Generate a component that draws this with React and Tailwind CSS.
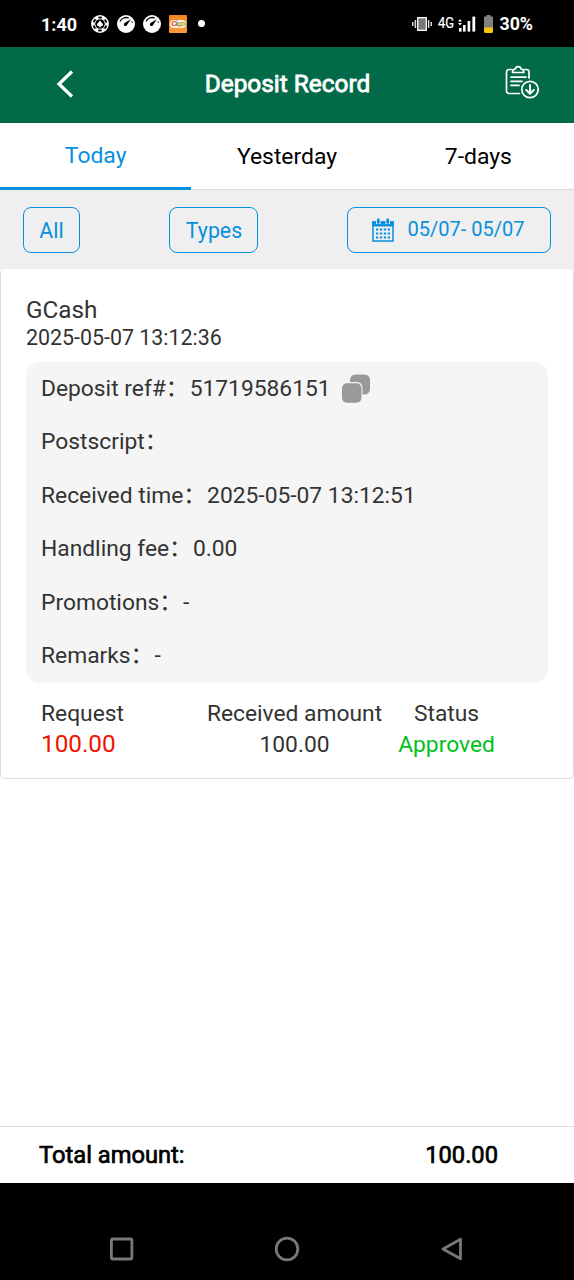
const tabs = ["Today", "Yesterday", "7-days"];

const details = [
  { label: "Deposit ref#", value: "51719586151", copy: true },
  { label: "Postscript", value: "" },
  { label: "Received time", value: "2025-05-07 13:12:51" },
  { label: "Handling fee", value: "0.00" },
  { label: "Promotions", value: "-" },
  { label: "Remarks", value: "-" },
];

const ChipIcon = () => (
  <svg width="18" height="18" viewBox="0 0 18 18" fill="none">
    <circle cx="9" cy="9" r="8.2" stroke="#fff" strokeWidth="1.4" />
    <circle
      cx="9"
      cy="9"
      r="6.8"
      stroke="#fff"
      strokeWidth="2.6"
      strokeDasharray="3.56 3.56"
      strokeDashoffset="1.78"
    />
    <circle cx="9" cy="9" r="5.2" stroke="#fff" strokeWidth="0.9" />
    <path
      d="M9 5.4C9.900 7 12 8 12 9.800c0 1.300-1.600 1.800-2.500 1l.7 1.500H7.800l.7-1.500c-.9.8-2.500.3-2.500-1C6 8 8.100 7 9 5.400z"
      fill="#fff"
    />
  </svg>
);

const GaugeIcon = () => (
  <svg width="18" height="18" viewBox="0 0 18 18" fill="none">
    <circle cx="9" cy="9" r="9" fill="#fff" />
    <path d="M3 6.6A6.8 6.8 0 0 1 11.8 3" stroke="#000" strokeWidth="1.3" />
    <path d="M13.8 4.200L10.200 9.800a1.700 1.700 0 1 1-2.200-2z" fill="#000" />
    <path d="M14.8 6.2a6 6 0 0 1 .6 1.8" stroke="#000" strokeWidth="0.8" />
  </svg>
);

const StatusBar = () => (
  <div className="flex h-[47px] items-center justify-between bg-black pr-[41px] pl-[41px] text-white">
    <div className="flex items-center">
      <span className="w-[50px] pt-px text-[18px] font-bold">1:40</span>
      <div className="flex items-center gap-2">
        <ChipIcon />
        <GaugeIcon />
        <GaugeIcon />
        <div className="flex h-[18px] w-[18px] items-center justify-center rounded-[1px] bg-gradient-to-b from-[#f5861f] to-[#f89a3c]">
          <div className="flex h-2 w-4 items-center justify-center rounded-full bg-[#fdf3e4] text-[8px] leading-none font-bold tracking-[-0.8px]">
            <span className="text-[#e2502c]">C</span>
            <span className="text-[#2f6db5]">i</span>
            <span className="text-[#e8922c]">g</span>
            <span className="text-[#7dbb3c]">o</span>
          </div>
        </div>
        <div className="ml-[3px] h-[7px] w-[7px] rounded-full bg-white" />
      </div>
    </div>
    <div className="flex items-center">
      <svg width="20" height="16" viewBox="0 0 20 16">
        <rect x="5.7" y="1.7" width="8.6" height="12.6" fill="#777" stroke="#fff" strokeWidth="1.3" />
        <path
          d="M3.4 4v8M.8 6v4M16.6 4v8M19.2 6v4"
          stroke="#ddd"
          strokeWidth="1.500"
        />
      </svg>
      <span className="ml-1.5 w-[17px] origin-left scale-x-[0.86] text-[15px] [-webkit-text-stroke:0.2px_white]">
        4G
      </span>
      <svg className="ml-[3px]" width="18" height="16" viewBox="0 0 18 16" fill="#fff">
        <path d="M2 3L4 5.5H0zM2 9.5L0 7h4z" />
        <rect x="1" y="12" width="2.600" height="3.600" />
        <rect x="5" y="9" width="2.600" height="6.600" />
        <rect x="9.600" y="5" width="2.600" height="10.600" />
        <rect x="14.400" y="0.600" width="2.800" height="15" />
      </svg>
      <svg className="ml-2" width="9" height="18" viewBox="0 0 9 18">
        <path d="M2.5 0h4v1.5H9V13H0V1.500H2.500z" fill="#808080" />
        <path d="M0 12.500h9V16.500a1.500 1.500 0 0 1-1.500 1.500h-6A1.500 1.500 0 0 1 0 16.500z" fill="#fbc500" />
      </svg>
      <span className="ml-1.5 pt-0.5 text-[17.800px] font-bold">30%</span>
    </div>
  </div>
);

const Header = () => (
  <div className="grid h-[76px] grid-cols-3 items-center bg-[#026a48] text-white">
    <svg className="mb-0.5 ml-[56px]" width="18" height="28" viewBox="0 0 18 28" fill="none">
      <path d="M16 1.500L3 14l13 12.500" stroke="#fff" strokeWidth="3.200" />
    </svg>
    <h1 className="pb-0.5 pl-px text-center text-[24.400px] leading-none whitespace-nowrap [-webkit-text-stroke:0.8px_white]">
      Deposit Record
    </h1>
    <svg
      className="mr-[35px] mb-1.5 ml-auto"
      width="34"
      height="34"
      viewBox="0 0 34 34"
      fill="none"
      stroke="#fff"
      strokeWidth="1.700"
      strokeLinecap="round"
      strokeLinejoin="round"
    >
      <path d="M7 4.500H4a2.500 2.500 0 0 0-2.500 2.500v19A2.500 2.500 0 0 0 4 28.500h10.500M19 4.500h2.500A2.500 2.500 0 0 1 24 7v6" />
      <path d="M7.500 7.500c0-2 .8-3.200 2.700-3.500a3 3 0 0 1 5.900 0c1.900.3 2.700 1.500 2.700 3.500z" />
      <path d="M6 12.200h15M6 16.300h11M6 20.400h8" />
      <circle cx="25" cy="24.500" r="8.200" />
      <path d="M25 20v8.500M21.200 25l3.800 3.700 3.800-3.700" strokeWidth="2" />
    </svg>
  </div>
);

const CalendarIcon = () => (
  <svg width="22" height="24" viewBox="0 0 22 24">
    <path d="M1 4h20v19H1z" fill="none" stroke="#0790dd" strokeWidth="1.500" />
    <path d="M.3 3.300h21.400V8.500H.3z" fill="#0790dd" />
    <path d="M6.300 0v6M15.700 0v6" stroke="#efefef" strokeWidth="4.600" />
    <path
      d="M6.300 2v2.500M15.700 2v2.500"
      stroke="#0790dd"
      strokeWidth="2.800"
      strokeLinecap="round"
    />
    <path
      d="M4 11.500h14M4 15.500h14M4 19.500h14"
      stroke="#0790dd"
      strokeWidth="2.200"
      strokeDasharray="2.300 1.600"
    />
  </svg>
);

const CopyIcon = () => (
  <svg className="ml-[10px]" width="30" height="29" viewBox="0 0 30 29">
    <rect x="9" y="0.500" width="20" height="20" rx="5.500" fill="#999" />
    <rect x="0" y="8" width="21.500" height="21.500" rx="5.500" fill="#f5f5f5" />
    <rect x="1" y="9.200" width="19.500" height="19.500" rx="5" fill="#999" />
  </svg>
);

const App = () => {
  return (
    <div className="flex h-[1280px] w-[574px] flex-col overflow-hidden bg-white font-['Roboto','Noto_Sans_CJK_SC',sans-serif] text-[#333]">
      <StatusBar />
      <Header />

      <div className="grid h-[67px] grid-cols-3 border-b border-[#d9d9d9] text-[22.900px]">
        {tabs.map((tab) => (
          <button
            key={tab}
            className={
              tab === "Today"
                ? "-mb-px border-b-[3px] border-[#0790dd] pt-0.5 text-[#0790dd]"
                : "pt-0.5 text-black"
            }
          >
            {tab}
          </button>
        ))}
      </div>

      <div className="flex h-[79px] items-center justify-between bg-[#efefef] px-[23px] text-[21.300px] text-[#0790dd]">
        <button className="h-[46px] w-[57px] rounded-lg border border-[#0790dd] pt-0.5">
          All
        </button>
        <button className="mr-px h-[46px] w-[89px] rounded-lg border border-[#0790dd] pt-0.5 pl-0.5">
          Types
        </button>
        <button className="flex h-[46px] w-[204px] items-center justify-center rounded-lg border border-[#0790dd] pr-0.5 text-[20px]">
          <CalendarIcon />
          <span className="ml-3.5 pb-px">05/07- 05/07</span>
        </button>
      </div>

      <div className="h-[510px] rounded-[5px] border border-t-0 border-[#dcdcdc] px-[25px] pt-[27px]">
        <h2 className="text-[24.300px] leading-[28px]">GCash</h2>
        <p className="text-[21.400px] leading-[27px]">2025-05-07 13:12:36</p>

        <div className="mt-[11px] grid h-[321px] w-[522px] grid-rows-6 rounded-[14px] bg-[#f5f5f5] pl-[15px] text-[22.800px]">
          {details.map((item) => (
            <div key={item.label} className="flex items-center leading-none">
              <span className="pt-px">
                {item.label}
                {"\uff1a"}
              </span>
              <span className="ml-px pt-px">{item.value}</span>
              {item.copy && <CopyIcon />}
            </div>
          ))}
        </div>

        <div className="mt-[15px] flex text-[22.800px] leading-[31px]">
          <div className="ml-[15px] w-[165px]">
            <p>Request</p>
            <p className="text-[24.300px] leading-[29px] text-[#f01400]">
              100.00
            </p>
          </div>
          <div className="w-[177px] text-center whitespace-nowrap">
            <p>Received amount</p>
            <p>100.00</p>
          </div>
          <div className="w-[127px] text-center">
            <p>Status</p>
            <p className="text-[#02c01b]">Approved</p>
          </div>
        </div>
      </div>

      <div className="mt-auto flex h-[57px] items-center justify-between border-t border-[#d9d9d9] pt-0.5 pr-[76px] pl-[39px] text-[23.700px] text-black [-webkit-text-stroke:0.7px_black]">
        <span>Total amount:</span>
        <span>100.00</span>
      </div>

      <div className="flex h-[97px] shrink-0 items-center justify-between bg-black px-[110px] pt-[35px]">
        <svg width="24" height="24" viewBox="0 0 24 24" fill="none">
          <rect x="1.400" y="2" width="20.500" height="20" rx="1.500" stroke="#787878" strokeWidth="2.800" />
        </svg>
        <svg width="26" height="26" viewBox="0 0 26 26" fill="none">
          <circle cx="13" cy="13" r="10.800" stroke="#787878" strokeWidth="2.800" />
        </svg>
        <svg width="24" height="24" viewBox="0 0 24 24" fill="none">
          <path
            d="M20.500 2.200v19.600L3 12z"
            stroke="#787878"
            strokeWidth="2.800"
            strokeLinejoin="round"
          />
        </svg>
      </div>
    </div>
  );
};

export default App;
